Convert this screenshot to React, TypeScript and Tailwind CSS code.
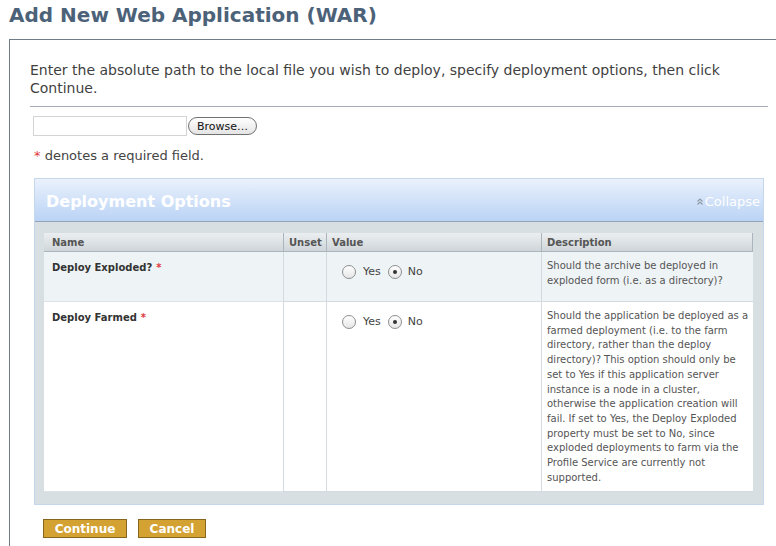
import React from 'react'

// ─── Radio (old-style aqua-ish) ──────────────────────────────────────────────

function Radio({ checked }: { checked?: boolean }) {
  return (
    <span className="w-[14px] h-[14px] rounded-full border border-[#8e8e8e] bg-gradient-to-b from-white to-[#e6e6e6] flex items-center justify-center flex-shrink-0">
      {checked && <span className="w-[4px] h-[4px] rounded-full bg-[#333]" />}
    </span>
  )
}

function YesNo() {
  return (
    <div className="flex items-center text-[11px] text-[#444]">
      <Radio />
      <span className="ml-[7px]">Yes</span>
      <span className="ml-[7px]">
        <Radio checked />
      </span>
      <span className="ml-[6px]">No</span>
    </div>
  )
}

const Req = () => <span className="text-[#e0393e] ml-[4px]">*</span>

// ─── Options table ───────────────────────────────────────────────────────────

const rows = [
  {
    name: 'Deploy Exploded?',
    desc: ['Should the archive be deployed in', 'exploded form (i.e. as a directory)?'],
    bg: 'bg-[#eef3f6]',
    h: 'h-[50px]',
  },
  {
    name: 'Deploy Farmed',
    desc: [
      'Should the application be deployed as a',
      'farmed deployment (i.e. to the farm',
      'directory, rather than the deploy',
      'directory)? This option should only be',
      'set to Yes if this application server',
      'instance is a node in a cluster,',
      'otherwise the application creation will',
      'fail. If set to Yes, the Deploy Exploded',
      'property must be set to No, since',
      'exploded deployments to farm via the',
      'Profile Service are currently not',
      'supported.',
    ],
    bg: 'bg-white',
    h: 'h-[190px]',
  },
]

function OptionsTable() {
  return (
    <div className="grid grid-cols-[239px_43px_215px_212px] text-[10px] text-[#444]">
      {/* header */}
      <div className="h-[19px] bg-gradient-to-b from-[#eceff1] to-[#cfd5d9] border-b border-[#aab5bd] font-bold text-[#555] pl-[8px] flex items-center">Name</div>
      <div className="h-[19px] bg-gradient-to-b from-[#eceff1] to-[#cfd5d9] border-b border-l border-[#aab5bd] font-bold text-[#555] pl-[5px] flex items-center">Unset</div>
      <div className="h-[19px] bg-gradient-to-b from-[#eceff1] to-[#cfd5d9] border-b border-l border-[#aab5bd] font-bold text-[#555] pl-[5px] flex items-center">Value</div>
      <div className="h-[19px] bg-gradient-to-b from-[#eceff1] to-[#cfd5d9] border-b border-l border-r border-[#aab5bd] font-bold text-[#555] pl-[5px] flex items-center">Description</div>

      {rows.map((r) => (
        <React.Fragment key={r.name}>
          <div className={`${r.bg} ${r.h} border-b border-[#dbe3e8] pl-[8px] pt-[8px] font-bold text-[#333]`}>
            {r.name}
            <Req />
          </div>
          <div className={`${r.bg} ${r.h} border-b border-l border-[#d3dbe1]`} />
          <div className={`${r.bg} ${r.h} border-b border-l border-[#d3dbe1] pl-[15px] pt-[12px]`}>
            <YesNo />
          </div>
          <div className={`${r.bg} ${r.h} border-b border-l border-[#d3dbe1] pl-[5px] pt-[7px] leading-[14.7px] text-[#555] whitespace-nowrap overflow-hidden`}>
            {r.desc.map((line) => (
              <div key={line}>{line}</div>
            ))}
          </div>
        </React.Fragment>
      ))}
    </div>
  )
}

// ─── Main ────────────────────────────────────────────────────────────────────

export default function App() {
  return (
    <div className="w-[776px] h-[546px] overflow-hidden bg-white font-['DejaVu_Sans',Verdana,sans-serif]">
      <h1 className="px-[9px] pt-[3px] text-[20px] leading-[24px] font-bold text-[#4c6279]">
        Add New Web Application (WAR)
      </h1>

      <div className="mt-[12px] ml-[9px] border-l border-t border-[#6f7c87] pl-[20px] pr-[8px] pt-[21px] h-[600px]">
        <p className="text-[14px] leading-[18px] text-[#3f3f3f]">
          Enter the absolute path to the local file you wish to deploy, specify deployment options, then click Continue.
        </p>
        <div className="mt-[9px] border-t border-[#a3acb5]" />

        {/* file chooser */}
        <div className="mt-[9px] ml-[3px] flex items-center">
          <div className="w-[154px] h-[20px] border border-[#d4d4d4] bg-white" />
          <button className="ml-[1px] w-[69px] h-[18px] rounded-full border border-[#707070] bg-gradient-to-b from-white to-[#e4e4e4] text-[11px] leading-none text-[#111]">
            Browse…
          </button>
        </div>

        <p className="mt-[12px] ml-[4px] text-[13px] leading-[16px] text-[#444]">
          <span className="text-[#e0393e]">*</span> denotes a required field.
        </p>

        {/* deployment options panel */}
        <div className="mt-[14px] ml-[4px] w-[730px] border border-[#c6d7ec]">
          <div className="h-[43px] bg-gradient-to-b from-[#eaf1fc] to-[#bad3f5] border-b border-[#93a5b6] flex items-center justify-between pl-[11px] pr-[3px]">
            <span className="text-[16px] font-bold text-white mt-[3px]">Deployment Options</span>
            <span className="flex items-center text-[13px] text-white mt-[3px]">
              <svg width="8" height="9" viewBox="0 0 8 9" fill="none" stroke="#8d99a5" strokeWidth="1.1" className="mr-[1px]">
                <polyline points="1.5,4.5 4,2 6.5,4.5" />
                <polyline points="1.5,7.5 4,5 6.5,7.5" />
              </svg>
              Collapse
            </span>
          </div>
          <div className="bg-[#d8dfe3] px-[9px] pt-[11px] pb-[12px]">
            <OptionsTable />
          </div>
        </div>

        {/* actions */}
        <div className="mt-[14px] ml-[13px] flex gap-[11px]">
          <button className="w-[84px] h-[19px] bg-[#d4a232] border border-[#86661a] text-white text-[12px] font-bold leading-none">
            Continue
          </button>
          <button className="w-[68px] h-[19px] bg-[#d4a232] border border-[#86661a] text-white text-[12px] font-bold leading-none">
            Cancel
          </button>
        </div>
      </div>
    </div>
  )
}
